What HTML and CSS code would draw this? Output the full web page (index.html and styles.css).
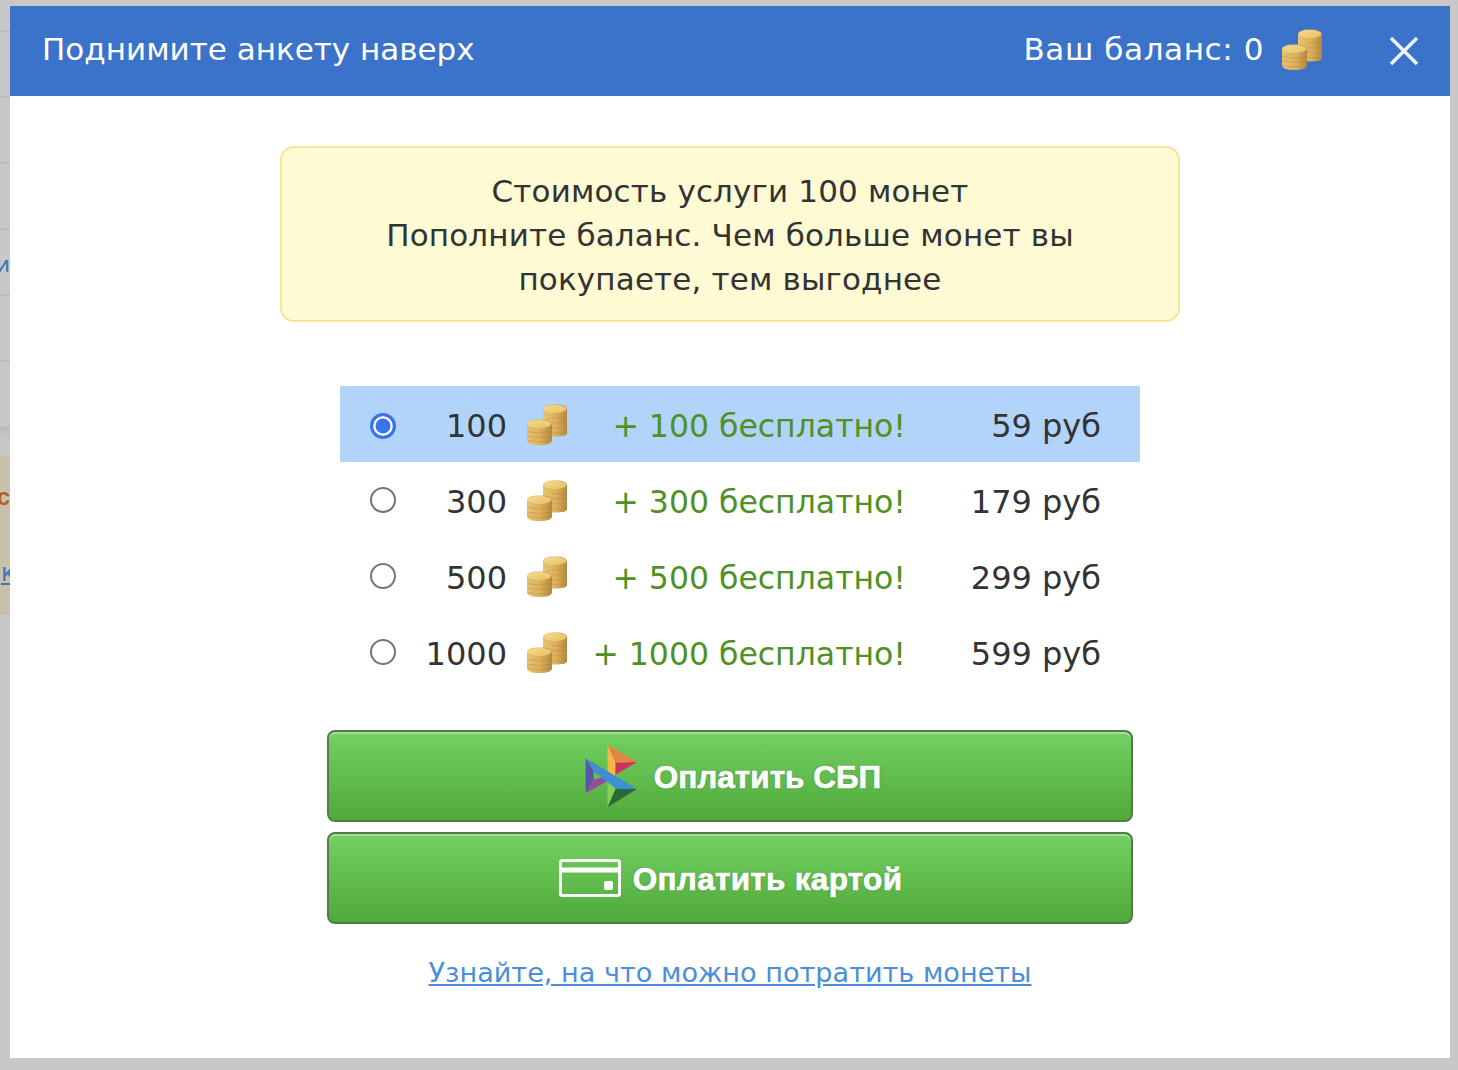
FILE: index.html
```html
<!DOCTYPE html>
<html lang="ru">
<head>
<meta charset="utf-8">
<title>Поднимите анкету наверх</title>
<link rel="stylesheet" href="styles.css">
</head>
<body>
<svg class="defs" aria-hidden="true">
  <defs>
    <linearGradient id="coinSide" x1="0" x2="1" y1="0" y2="0">
      <stop offset="0" stop-color="#e6c272"/>
      <stop offset=".55" stop-color="#dcb05a"/>
      <stop offset="1" stop-color="#b08840"/>
    </linearGradient>
    <linearGradient id="coinTop" x1="0" x2="1" y1="0" y2="1">
      <stop offset="0" stop-color="#f5dc8c"/>
      <stop offset="1" stop-color="#e8c066"/>
    </linearGradient>
    <symbol id="coins" viewBox="0 0 42 41">
      <path d="M17 5.500c0-3 4-5 12-5s12 2 12 5V29c0 2.500-4 3.500-12 3.500S17 31.500 17 29z" fill="url(#coinSide)"/>
      <ellipse cx="29" cy="5" rx="11.500" ry="4" fill="url(#coinTop)"/>
      <path d="M26 13.500q8 1.500 15-.5M26 18.500q8 1.500 15-.5M26 23.500q8 1.500 15-.5M26 28.500q8 1.500 15-.5" fill="none" stroke="#a87b35" stroke-opacity=".35"/>
      <path d="M1 20.500c0-3 4-5 12.500-5s12.500 2 12.500 5V36c0 3-4 5-12.500 5S1 39 1 36z" fill="url(#coinSide)"/>
      <ellipse cx="13.500" cy="20" rx="12" ry="4" fill="url(#coinTop)"/>
      <path d="M1 27.500q12.500 3 25 0M1 32q12.500 3 25 0M1 36.500q12.500 3 25 0" fill="none" stroke="#a87b35" stroke-opacity=".35"/>
    </symbol>
  </defs>
</svg>

<div class="page-edge" aria-hidden="true">
  <div class="edge-row edge-row-top"></div>
  <div class="edge-row edge-row-second"></div>
  <div class="edge-row edge-row-third"></div>
  <div class="edge-row edge-row-item"></div>
  <div class="edge-row edge-row-item edge-link">и</div>
  <div class="edge-row edge-row-item"></div>
  <div class="edge-row edge-row-item"></div>
  <div class="edge-shadow"></div>
  <div class="edge-notice">
    <span class="edge-bold">с</span>
    <span class="edge-under">к</span>
  </div>
</div>

<main class="modal">
  <header class="modal-head">
    <h1 class="modal-title">Поднимите анкету наверх</h1>
    <div class="balance">
      <span>Ваш баланс: 0</span>
      <svg class="coin-icon"><use href="#coins"/></svg>
    </div>
    <svg class="close" viewBox="0 0 30 30"><path d="M2 2l26 26M28 2L2 28"/></svg>
  </header>

  <section class="modal-body">
    <p class="notice">Стоимость услуги 100 монет<br>Пополните баланс. Чем больше монет вы покупаете, тем выгоднее</p>

    <form class="packs">
      <label class="pack pack-active">
        <span class="radio radio-on"></span>
        <span class="count">100</span>
        <svg class="coin-icon"><use href="#coins"/></svg>
        <span class="bonus">+ 100 бесплатно!</span>
        <span class="price">59 руб</span>
      </label>
      <label class="pack">
        <span class="radio"></span>
        <span class="count">300</span>
        <svg class="coin-icon"><use href="#coins"/></svg>
        <span class="bonus">+ 300 бесплатно!</span>
        <span class="price">179 руб</span>
      </label>
      <label class="pack">
        <span class="radio"></span>
        <span class="count">500</span>
        <svg class="coin-icon"><use href="#coins"/></svg>
        <span class="bonus">+ 500 бесплатно!</span>
        <span class="price">299 руб</span>
      </label>
      <label class="pack">
        <span class="radio"></span>
        <span class="count">1000</span>
        <svg class="coin-icon"><use href="#coins"/></svg>
        <span class="bonus">+ 1000 бесплатно!</span>
        <span class="price">599 руб</span>
      </label>
    </form>

    <div class="actions">
      <button class="pay" type="button">
        <svg class="sbp" viewBox="795 58 160 192">
          <path fill="#e58442" d="M863 60l89 52-65 3z"/>
          <path fill="#f4b846" d="M863 60l24 55v35l-24 15z"/>
          <path fill="#d1305c" d="M887 115l65-3-65 38z"/>
          <path fill="#5a55a6" d="M797 100l24 40v25l-24 42z"/>
          <path fill="#964b9e" d="M797 207l24-42 42-10v14z"/>
          <path fill="#84cf55" d="M863 163l24 17v35l-24 33z"/>
          <path fill="#2b6a38" d="M863 248l24-55h65z"/>
          <path fill="#3f8ed1" d="M797 100l155 93h-62l-69-53z"/>
        </svg>
        <span>Оплатить СБП</span>
      </button>
      <button class="pay pay-card" type="button">
        <svg class="card" viewBox="0 0 62 38">
          <rect x="1.500" y="1.500" width="59" height="35" rx="2" fill="none" stroke="#fff" stroke-width="3"/>
          <path d="M1 11h60" stroke="#fff" stroke-width="5"/>
          <rect x="45" y="22" width="9" height="9" rx="2" fill="#fff"/>
        </svg>
        <span>Оплатить картой</span>
      </button>
    </div>

    <a class="more" href="#">Узнайте, на что можно потратить монеты</a>
  </section>
</main>
</body>
</html>
```

FILE: styles.css
```css
* {
  box-sizing: border-box;
}

html,
body {
  margin: 0;
  height: 1070px;
  overflow: hidden;
}

body {
  position: relative;
  background: #c8c8c8;
  font-family: "DejaVu Sans", Verdana, sans-serif;
  color: #333;
}

.defs {
  position: absolute;
  width: 0;
  height: 0;
}

/* clipped strip of the page behind the dialog */
.page-edge {
  display: flex;
  flex-direction: column;
  width: 10px;
  overflow: hidden;
}

.edge-row {
  border-bottom: 2px solid #bcbcbc;
  height: 66px;
  flex: none;
  display: flex;
  align-items: center;
}

.edge-row-top {
  height: 32px;
}

.edge-link {
  color: #3f75b5;
  font-size: 22px;
  justify-content: flex-end;
  padding-top: 4px;
}

.edge-shadow {
  height: 28px;
  flex: none;
  background: linear-gradient(#bcbcbc, #c8c8c8 12px);
}

.edge-notice {
  height: 159px;
  flex: none;
  background: #c8c1aa;
  position: relative;
  font-size: 24px;
}

.edge-bold {
  position: absolute;
  right: 0;
  top: 27px;
  color: #b85c28;
  font-weight: 700;
  font-family: "Liberation Sans", sans-serif;
}

.edge-under {
  position: absolute;
  left: 1px;
  top: 103px;
  color: #3f75b5;
  text-decoration: underline;
}

.modal {
  position: absolute;
  left: 10px;
  top: 6px;
  width: 1440px;
  height: 1052px;
  background: #fff;
}

.modal-head {
  height: 90px;
  background: #3b73cb;
  color: #fff;
  display: flex;
  align-items: center;
  padding: 0 31px 0 32px;
  font-size: 31px;
}

.modal-title {
  margin: 0 auto 4px 0;
  font-size: 31px;
  font-weight: 400;
}

.balance {
  display: flex;
  align-items: center;
  gap: 17px;
  margin-bottom: 4px;
  letter-spacing: .6px;
}

.coin-icon {
  width: 42px;
  height: 41px;
  flex: none;
  filter: blur(.4px);
}

.close {
  width: 30px;
  height: 30px;
  margin-left: 66px;
  fill: none;
  stroke: #fff;
  stroke-width: 3.500;
  opacity: .92;
}

.modal-body {
  display: flex;
  flex-direction: column;
  align-items: center;
  padding-top: 50px;
}

.notice {
  width: 900px;
  height: 176px;
  margin: 0 0 64px;
  padding: 21px 90px 0;
  background: #fefad4;
  border: 2px solid #f7e59b;
  border-radius: 14px;
  text-align: center;
  font-size: 31px;
  letter-spacing: .15px;
  line-height: 44px;
}

.packs {
  width: 800px;
  margin-left: 20px;
  display: flex;
  flex-direction: column;
}

.pack {
  height: 76px;
  display: grid;
  grid-template-columns: 26px 111px 61px 338px 195px;
  align-items: center;
  padding-left: 30px;
  font-size: 32px;
}

.pack-active {
  background: #b2d3fa;
}

.radio {
  width: 26px;
  height: 26px;
  border: 2px solid #767676;
  border-radius: 50%;
  background: #fff;
}

.radio-on {
  border: 3px solid #3a73f0;
  background: #3a73f0;
  box-shadow: inset 0 0 0 2.500px #fff;
  margin-top: 4px;
}

.count {
  text-align: right;
  padding-top: 4px;
}

.pack .coin-icon {
  margin-left: 19px;
}

.bonus {
  text-align: right;
  color: #4f9123;
  font-size: 31.500px;
  padding-top: 4px;
}

.price {
  text-align: right;
  padding-top: 4px;
}

.actions {
  display: flex;
  flex-direction: column;
  gap: 10px;
  margin-top: 40px;
}

.pay {
  width: 806px;
  height: 92px;
  display: flex;
  align-items: center;
  justify-content: center;
  gap: 16px;
  border: 2px solid #4e7d4a;
  border-radius: 8px;
  background: linear-gradient(#74d063, #50a93a);
  box-shadow: inset 0 2px 0 #a5e09a;
  color: #fff;
  font-family: "Liberation Sans", Arial, sans-serif;
  font-size: 31.500px;
  font-weight: 700;
  -webkit-text-stroke: .7px #fff;
  text-shadow: 0 0 2px rgba(40, 90, 30, .7);
  padding: 2px 0 0 6px;
}

.pay-card {
  gap: 12px;
  padding-left: 1px;
  letter-spacing: .3px;
}

.sbp {
  width: 53px;
  height: 64px;
  margin-top: -2px;
}

.card {
  width: 62px;
  height: 38px;
  margin-top: -2px;
}

.more {
  margin-top: 33px;
  font-size: 27.100px;
  color: #4a8fd8;
  text-decoration: underline;
}
```
